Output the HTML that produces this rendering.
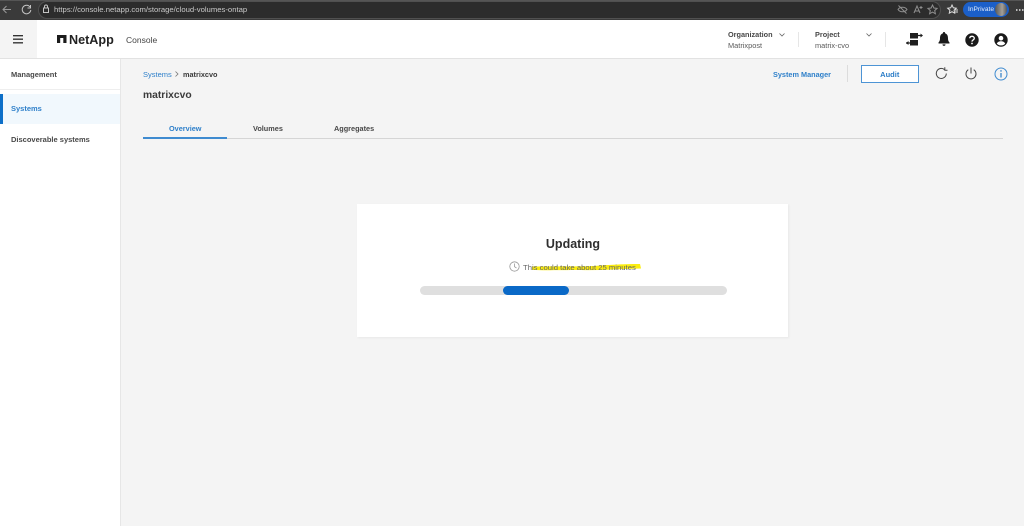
<!DOCTYPE html>
<html><head><meta charset="utf-8"><style>
html,body{margin:0;padding:0;width:1024px;height:526px;overflow:hidden;background:#f4f4f4;font-family:"Liberation Sans",sans-serif;color:#333}
.a{position:absolute;white-space:nowrap}
svg{position:absolute;overflow:visible}
#root{position:absolute;left:0;top:0;width:1024px;height:526px;filter:blur(.35px)}
.t{font-size:7.300px;font-weight:700;line-height:10px;color:#484848}
.r{font-size:7.400px;line-height:10px;color:#5a5a5a}
.blue{color:#2f80ca}
</style></head><body><div id="root">
<div class="a" style="left:0;top:0;width:1024px;height:20px;background:#3a3a3a"></div>
<div class="a" style="left:0;top:0;width:1024px;height:1px;background:#555"></div>
<div class="a" style="left:38px;top:1px;width:202px;height:16px;background:#2c2c2c;border:1px solid #505050;border-right:0;border-radius:9px 0 0 9px"></div>
<div class="a" style="left:240px;top:1px;width:700px;height:16px;background:#2c2c2c;border-top:1px solid #505050;border-bottom:1px solid #505050;border-right:1px solid #505050;border-radius:0 9px 9px 0"></div>
<svg style="left:0;top:0" width="60" height="20" fill="none" stroke="#c4c4c4" stroke-width="1"><path d="M11 9.500H3M6.500 6L3 9.500 6.500 13" stroke="#999"/><path d="M30 7a4.300 4.300 0 1 0 .8 3M30.500 5v3h-3"/><rect x="43.500" y="8" width="5" height="4.500"/><path d="M44.500 8V6.500a1.500 1.500 0 0 1 3 0V8"/></svg>
<div class="a" style="left:54px;top:4px;font-size:7.700px;line-height:11px;color:#c9c9c9">https://console.netapp.com/storage/cloud-volumes-ontap</div>
<svg style="left:895px;top:0" width="70" height="20" fill="none" stroke="#8f8f8f" stroke-width="1"><path d="M3 9.500c2-3 7-3 9 0-2 3-7 3-9 0zM3.500 5.500l8 8"/><path d="M19 13l3-7 3 7M20.200 11h3.600M26 6v3M24.500 7.500h3"/><path d="M37.500 5l1.400 3 3.200.4-2.400 2.200.7 3.200-2.900-1.700-2.900 1.700.7-3.200-2.400-2.200 3.200-.4z"/><path d="M57 5l1.300 2.800 3 .4-2.200 2 .6 3-2.700-1.500-2.700 1.500.6-3-2.200-2 3-.4z" stroke="#ddd"/><path d="M60 10h3M60 12h3" stroke="#ddd"/></svg>
<div class="a" style="left:963px;top:2px;width:46px;height:15px;background:#1b5fc9;border-radius:8px"></div>
<div class="a" style="left:968px;top:4px;font-size:6.600px;line-height:11px;color:#e5edfa">InPrivate</div>
<div class="a" style="left:995px;top:3px;width:12px;height:13px;border-radius:50%;background:linear-gradient(90deg,#575757,#a39f98 60%,#555)"></div>
<div class="a" style="left:1016px;top:8.500px;width:8px;height:2px;background:repeating-linear-gradient(90deg,#bbb 0 1.500px,transparent 1.500px 3px)"></div>

<div class="a" style="left:0;top:20px;width:1024px;height:38px;background:#fff"></div>
<div class="a" style="left:0;top:20px;width:37px;height:38px;background:#f4f4f4"></div>
<div class="a" style="left:0;top:58px;width:1024px;height:1px;background:#e2e2e2"></div>
<svg style="left:13px;top:35px" width="10" height="9"><path d="M0 .7H10M0 4.200H10M0 7.800H10" stroke="#333" stroke-width="1.300"/></svg>
<svg style="left:57px;top:35px" width="10" height="8"><path d="M0 0H9.500V8H6.300V3H3.200V8H0z" fill="#1c1c1c"/></svg>
<div class="a" style="left:69px;top:32.500px;font-size:12.600px;line-height:14px;font-weight:700;color:#222">NetApp</div>
<div class="a" style="left:126px;top:34px;font-size:8.500px;line-height:12px;color:#444">Console</div>

<div class="a t" style="left:728px;top:29.500px">Organization</div>
<div class="a r" style="left:728px;top:40.500px">Matrixpost</div>
<svg style="left:779px;top:33px" width="6" height="4" fill="none"><path d="M.5 .5L3 3 5.500 .5" stroke="#666" stroke-width=".8"/></svg>
<div class="a" style="left:798px;top:32px;width:1px;height:15px;background:#e6e6e6"></div>
<div class="a t" style="left:815px;top:29.500px">Project</div>
<div class="a r" style="left:815px;top:40.500px">matrix-cvo</div>
<svg style="left:866px;top:33px" width="6" height="4" fill="none"><path d="M.5 .5L3 3 5.500 .5" stroke="#666" stroke-width=".8"/></svg>
<div class="a" style="left:885px;top:32px;width:1px;height:15px;background:#e6e6e6"></div>
<svg style="left:906px;top:32px" width="17" height="15"><rect x="4" y="1" width="8" height="5.500" fill="#1f1f1f"/><rect x="4" y="8" width="8" height="5.500" fill="#1f1f1f"/><path d="M12 3.500H16M0 11H4" stroke="#1f1f1f" stroke-width="1.200"/><path d="M14.500 1.500L17 3.500 14.500 5.500zM2.500 9L0 11 2.500 13z" fill="#1f1f1f"/></svg>
<svg style="left:938px;top:32px" width="12" height="14"><path d="M6 0a1 1 0 0 1 1 1.200C9.500 2 10 4 10 6.500c0 2 .6 3 1.500 4v1H.5v-1C1.400 9.500 2 8.500 2 6.500 2 4 2.500 2 5 1.200A1 1 0 0 1 6 0z" fill="#1a1a1a"/><path d="M4.500 12.400h3a1.500 1.500 0 0 1-3 0z" fill="#1a1a1a"/></svg>
<svg style="left:965px;top:33px" width="14" height="14"><circle cx="7" cy="7" r="6.700" fill="#1a1a1a"/><path d="M4.800 5.300c0-1.300 1-2 2.200-2s2.300.8 2.300 2c0 1.700-2.300 1.600-2.300 3.300" fill="none" stroke="#fff" stroke-width="1.300"/><circle cx="7" cy="10.500" r=".9" fill="#fff"/></svg>
<svg style="left:994px;top:33px" width="14" height="14"><circle cx="7" cy="7" r="6.700" fill="#1a1a1a"/><circle cx="7" cy="5.200" r="2.300" fill="#fff"/><path d="M2.800 10.700c.8-1.800 2.400-2.400 4.200-2.400s3.400.6 4.200 2.400c-1 1-2.500 1.700-4.200 1.700s-3.200-.7-4.200-1.700z" fill="#fff"/></svg>

<div class="a" style="left:0;top:59px;width:120px;height:467px;background:#fff;border-right:1px solid #e6e6e6"></div>
<div class="a t" style="left:11px;top:69.500px;font-size:7.500px">Management</div>
<div class="a" style="left:0;top:89px;width:120px;height:1px;background:#eee"></div>
<div class="a" style="left:0;top:94px;width:120px;height:30px;background:#f1f8fd"></div>
<div class="a" style="left:0;top:94px;width:3px;height:30px;background:#0d6fc8"></div>
<div class="a t blue" style="left:11px;top:104px;font-size:7.500px">Systems</div>
<div class="a t" style="left:11px;top:134.500px;font-size:7.500px">Discoverable systems</div>

<div class="a blue" style="left:143px;top:69.500px;font-size:7.500px;line-height:10px">Systems</div>
<svg style="left:175px;top:71px" width="4" height="6" fill="none"><path d="M.5 .5L3 3 .5 5.500" stroke="#777" stroke-width=".8"/></svg>
<div class="a t" style="left:183px;top:69.500px;color:#3a3a3a">matrixcvo</div>
<div class="a" style="left:143px;top:88.500px;font-size:10.300px;line-height:14px;font-weight:700;color:#3a3a3a">matrixcvo</div>
<div class="a t blue" style="left:169px;top:123.500px">Overview</div>
<div class="a t" style="left:253px;top:123.500px">Volumes</div>
<div class="a t" style="left:334px;top:123.500px">Aggregates</div>
<div class="a" style="left:143px;top:138px;width:860px;height:1px;background:#d5d5d5"></div>
<div class="a" style="left:143px;top:137px;width:84px;height:2px;background:#3f8bd0"></div>

<div class="a t blue" style="left:773px;top:69.500px">System Manager</div>
<div class="a" style="left:847px;top:65px;width:1px;height:17px;background:#dcdcdc"></div>
<div class="a" style="left:861px;top:65px;width:55.500px;height:16px;border:1px solid #4d94d5;background:#fff;text-align:center;font-size:7.500px;font-weight:700;line-height:17px;color:#2a7cc7">Audit</div>
<svg style="left:935px;top:67px" width="13" height="13" fill="none" stroke="#444" stroke-width="1"><path d="M11.300 6.500a5 5 0 1 1-1.800-3.900"/><path d="M9.800 0.300V3.200H12.500"/></svg>
<svg style="left:965px;top:67px" width="12" height="13" fill="none" stroke="#444" stroke-width="1"><path d="M6 .5V6.500M3.300 2.700a5 5 0 1 0 5.400 0"/></svg>
<svg style="left:994px;top:67px" width="14" height="14" fill="none"><circle cx="7" cy="7" r="6" stroke="#3f8bd0"/><path d="M7 6V10.500" stroke="#2a7cc7" stroke-width="1.200"/><circle cx="7" cy="3.900" r=".8" fill="#2a7cc7"/></svg>

<div class="a" style="left:357px;top:204px;width:431px;height:133px;background:#fff;box-shadow:1px 1px 2px #e8e8e8"></div>
<div class="a" style="left:357.500px;top:236px;width:431px;text-align:center;font-size:12.500px;line-height:17px;font-weight:700;color:#2e2e2e">Updating</div>
<svg style="left:531px;top:261px" width="111" height="11"><path d="M1 5.500C30 5 50 6 70 4.500c15-1 28-1.500 39-1.500l1 4.500C90 7.800 70 9.500 50 9 30 9 15 9.500 1 9z" fill="#fbed10"/></svg>
<svg style="left:509px;top:261px" width="11" height="11" fill="none" stroke="#999" stroke-width=".8"><circle cx="5.500" cy="5.500" r="4.700"/><path d="M5.500 2.500V5.700L7.500 7"/></svg>
<div class="a" style="left:523px;top:263px;font-size:7.700px;line-height:10px;color:#666">This could take about 25 minutes</div>
<div class="a" style="left:420px;top:286px;width:307px;height:9px;background:#dfdfdf;border-radius:5px"></div>
<div class="a" style="left:503px;top:286px;width:66px;height:9px;background:#0a69c7;border-radius:5px"></div>
</div></body></html>
